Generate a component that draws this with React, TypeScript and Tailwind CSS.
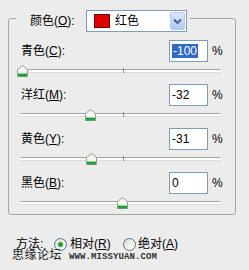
import React from "react";

const FONT = "font-['Liberation_Sans','Noto_Sans_CJK_SC',sans-serif]";

function Acc({ pre, k }: { pre: string; k: string }) {
  return (
    <span>
      {pre}(<span className="underline underline-offset-1">{k}</span>):
    </span>
  );
}

function Thumb() {
  return (
    <svg width="11" height="12" viewBox="0 0 11 12">
      <path d="M0.5 4.5 L5.5 0.5 L10.5 4.5 L10.5 11.5 L0.5 11.5 Z" fill="#f7f7f3" stroke="#9a9a94" />
      <rect x="1" y="9" width="9" height="2.5" fill="#22a13c" />
      <rect x="1" y="8" width="9" height="1" fill="#8fd19b" />
    </svg>
  );
}

function Slider({ value }: { value: number }) {
  const center = 2.6 + (value + 100);
  return (
    <div className="relative ml-[11px] h-[20px] w-[201px]">
      <div className="absolute left-0 right-0 top-[7px] h-[3px] rounded-full border-t border-[#a3a39d] bg-white shadow-[0_1px_0_#dcdcd6]" />
      <div className="absolute left-[103px] top-[6px] h-[5px] w-px bg-[#8e8e88]" />
      <div className="absolute top-[3px]" style={{ left: center - 5.5 }}>
        <Thumb />
      </div>
    </div>
  );
}

function Row({ pre, k, value, selected }: { pre: string; k: string; value: number; selected?: boolean }) {
  const txt = String(value);
  return (
    <div className="flex flex-col">
      <div className="flex h-[22px] items-center pl-[12px] pr-[13px]">
        <div className="flex-1 text-[12px] leading-[14px] text-black">
          <Acc pre={pre} k={k} />
        </div>
        <div className="flex h-[22px] w-[39px] items-center border border-[#7f9db9] bg-white pl-[2px] text-[12px] leading-[14px] text-black">
          {selected ? (
            <span className="bg-[#316ac5] px-px text-white">{txt}</span>
          ) : (
            <span>{txt}</span>
          )}
        </div>
        <span className="ml-[4px] w-[10px] text-[12px] leading-[14px] text-black">%</span>
      </div>
      <Slider value={value} />
    </div>
  );
}

function Radio({ checked }: { checked?: boolean }) {
  return (
    <svg width="13" height="13" viewBox="0 0 13 13">
      <defs>
        <linearGradient id="rg" x1="0" y1="0" x2="1" y2="1">
          <stop offset="0" stopColor="#dcdcd6" />
          <stop offset="1" stopColor="#ffffff" />
        </linearGradient>
      </defs>
      <circle cx="6.5" cy="6.5" r="6" fill="url(#rg)" stroke="#1c5180" strokeOpacity="0.75" />
      {checked && <circle cx="6.5" cy="6.5" r="2.5" fill="#21a121" />}
    </svg>
  );
}

export default function App() {
  return (
    <div className={`${FONT} h-[270px] w-[249px] overflow-hidden bg-[#ececec] pt-[18px] text-black`}>
      <div className="mx-[8px] flex w-[228px] flex-col rounded-[3px] border border-[#a8a8a2]">
        <div className="-mt-[9px] ml-[7px] flex h-[22px] items-center self-start bg-[#ececec] pl-[14px] pr-[3px]">
          <div className="w-[56px] text-[12px] leading-[14px]">
            <Acc pre="颜色" k="O" />
          </div>
          <div className="flex h-[22px] w-[101px] items-center border border-[#7f9db9] bg-white pl-[7px]">
            <div className="h-[14px] w-[16px] border border-[#6a0000] bg-[#e00000]" />
            <span className="ml-[5px] flex-1 text-[12px] leading-[14px]">红色</span>
            <div className="mr-px flex h-[18px] w-[15px] items-center justify-center rounded-[2px] border border-[#b8cbf5] bg-gradient-to-b from-[#dbe6fd] to-[#b5c9f7]">
              <svg width="9" height="7" viewBox="0 0 9 7">
                <path d="M1 1.5 L4.5 5 L8 1.5" fill="none" stroke="#4d6185" strokeWidth="2" />
              </svg>
            </div>
          </div>
        </div>
        <div className="mt-[8px] flex flex-col gap-[2px]">
          <Row pre="青色" k="C" value={-100} selected />
          <Row pre="洋红" k="M" value={-32} />
          <Row pre="黄色" k="Y" value={-31} />
          <Row pre="黑色" k="B" value={0} />
        </div>
      </div>
      <div className="ml-[16px] mt-[21px] flex h-[16px] items-center text-[12px] leading-[14px]">
        <span className="w-[38px]">方法:</span>
        <Radio checked />
        <span className="ml-[3px] w-[53px]">
          相对(<span className="underline underline-offset-1">R</span>)
        </span>
        <Radio />
        <span className="ml-[2px]">
          绝对(<span className="underline underline-offset-1">A</span>)
        </span>
      </div>
      <div className="-mt-[3px] ml-[12px] flex items-end">
        <span className="text-[12px] leading-[13px] tracking-[0.5px] text-[#222]">思缘论坛</span>
        <span className="ml-[7px] font-['Liberation_Mono',monospace] text-[9px] font-bold leading-[10px] tracking-[0.1px] text-[#333]">
          WWW.MISSYUAN.COM
        </span>
      </div>
    </div>
  );
}
